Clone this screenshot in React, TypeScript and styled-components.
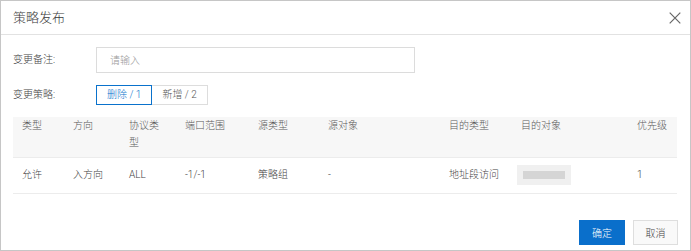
import React from "react";
import styled, { createGlobalStyle } from "styled-components";

const Global = createGlobalStyle`
  html, body { margin: 0; padding: 0; background: #fff; }
  body { font-family: "Roboto", "Noto Sans CJK SC", sans-serif; }
  * { box-sizing: border-box; }
`;

const Dialog = styled.div`
  width: 691px;
  height: 251px;
  border: 1px solid #c6c6c6;
  background: #fff;
  display: flex;
  flex-direction: column;
  font-family: "Roboto", "Noto Sans CJK SC", sans-serif;
  color: #444;
`;

const Header = styled.div`
  height: 34px;
  border-bottom: 1px solid #e2e2e2;
  display: flex;
  align-items: center;
  justify-content: space-between;
  padding: 0 7px 0 12px;
`;

const Title = styled.div`
  font-size: 13px;
  line-height: 18px;
  color: #3a3a3a;
  font-weight: 300;
`;

const Close = styled.button`
  width: 16px;
  height: 16px;
  padding: 0;
  border: 0;
  background: transparent;
  display: flex;
  align-items: center;
  justify-content: center;
  cursor: pointer;
`;

const Body = styled.div`
  padding: 12px 12px 0 12px;
  display: flex;
  flex-direction: column;
  flex: 1;
`;

const FormRow = styled.div<{ $mt?: number }>`
  display: flex;
  align-items: center;
  margin-top: ${(p) => p.$mt ?? 0}px;
`;

const Label = styled.div`
  width: 83px;
  font-size: 10px;
  line-height: 14px;
  color: #444;
  font-weight: 300;
`;

const Input = styled.input`
  width: 319px;
  height: 26px;
  border: 1px solid #dcdcdc;
  padding: 0 0 0 13px;
  font-family: inherit;
  font-size: 10px;
  color: #333;
  outline: none;
  font-weight: 300;
  &::placeholder { color: #9a9a9a; }
`;

const Tabs = styled.div`
  display: flex;
`;

const Tab = styled.button<{ $active?: boolean }>`
  height: 20px;
  padding: 0 10px;
  font-family: inherit;
  font-size: 10px;
  line-height: 18px;
  font-weight: 300;
  background: #fff;
  cursor: pointer;
  border: 1px solid ${(p) => (p.$active ? "#0a72cc" : "#dddddd")};
  border-left-width: ${(p) => (p.$active ? 1 : 0)}px;
  color: ${(p) => (p.$active ? "#0a72cc" : "#555")};
`;

const Table = styled.table`
  margin-top: 12px;
  width: 664px;
  border-collapse: collapse;
  table-layout: fixed;
  font-size: 10px;
  font-weight: 300;
`;

const Th = styled.th`
  background: #f7f7f7;
  height: 40px;
  padding: 0 9px 4px 9px;
  vertical-align: top;
  text-align: left;
  font-weight: 300;
  color: #5a5a5a;
  line-height: 17px;
  border-bottom: 1px solid #ececec;
`;

const Td = styled.td`
  height: 36px;
  padding: 0 9px;
  text-align: left;
  line-height: 16px;
  color: #444;
  border-bottom: 1px solid #ececec;
`;

const Redacted = styled.span`
  display: inline-block;
  width: 42px;
  height: 8px;
  margin-left: 2px;
  background: #d5d5d5;
  box-shadow: 0 0 0 6px #f0f0f0;
  filter: blur(0.6px);
  vertical-align: middle;
`;

const Footer = styled.div`
  margin-top: 26px;
  display: flex;
  justify-content: flex-end;
  gap: 8px;
`;

const Button = styled.button<{ $primary?: boolean }>`
  height: 25px;
  width: ${(p) => (p.$primary ? 46 : 45)}px;
  font-family: inherit;
  font-size: 10px;
  font-weight: 300;
  cursor: pointer;
  border: 1px solid ${(p) => (p.$primary ? "#0a6fcb" : "#dedede")};
  background: ${(p) => (p.$primary ? "#0a6fcb" : "#f9f9f9")};
  color: ${(p) => (p.$primary ? "#fff" : "#444")};
  padding: 0;
`;

const cols = [51, 56, 56, 73, 70, 121, 72, 116, 49];
const headers = ["类型", "方向", "协议类型", "端口范围", "源类型", "源对象", "目的类型", "目的对象", "优先级"];

export default function App() {
  return (
    <>
      <Global />
      <Dialog>
        <Header>
          <Title>策略发布</Title>
          <Close aria-label="close">
            <svg width="12" height="12" viewBox="0 0 12 12">
              <path d="M0.7 0.7 L11.3 11.3 M11.3 0.7 L0.7 11.3" stroke="#666" strokeWidth="1.2" fill="none" />
            </svg>
          </Close>
        </Header>
        <Body>
          <FormRow>
            <Label>变更备注:</Label>
            <Input placeholder="请输入" />
          </FormRow>
          <FormRow $mt={12}>
            <Label>变更策略:</Label>
            <Tabs>
              <Tab $active>删除 / 1</Tab>
              <Tab>新增 / 2</Tab>
            </Tabs>
          </FormRow>
          <Table>
            <colgroup>
              {cols.map((w, i) => (
                <col key={i} style={{ width: w }} />
              ))}
            </colgroup>
            <thead>
              <tr>
                {headers.map((h) => (
                  <Th key={h}>{h}</Th>
                ))}
              </tr>
            </thead>
            <tbody>
              <tr>
                <Td>允许</Td>
                <Td>入方向</Td>
                <Td>ALL</Td>
                <Td>-1/-1</Td>
                <Td>策略组</Td>
                <Td>-</Td>
                <Td>地址段访问</Td>
                <Td><Redacted /></Td>
                <Td>1</Td>
              </tr>
            </tbody>
          </Table>
          <Footer>
            <Button $primary>确定</Button>
            <Button>取消</Button>
          </Footer>
        </Body>
      </Dialog>
    </>
  );
}
